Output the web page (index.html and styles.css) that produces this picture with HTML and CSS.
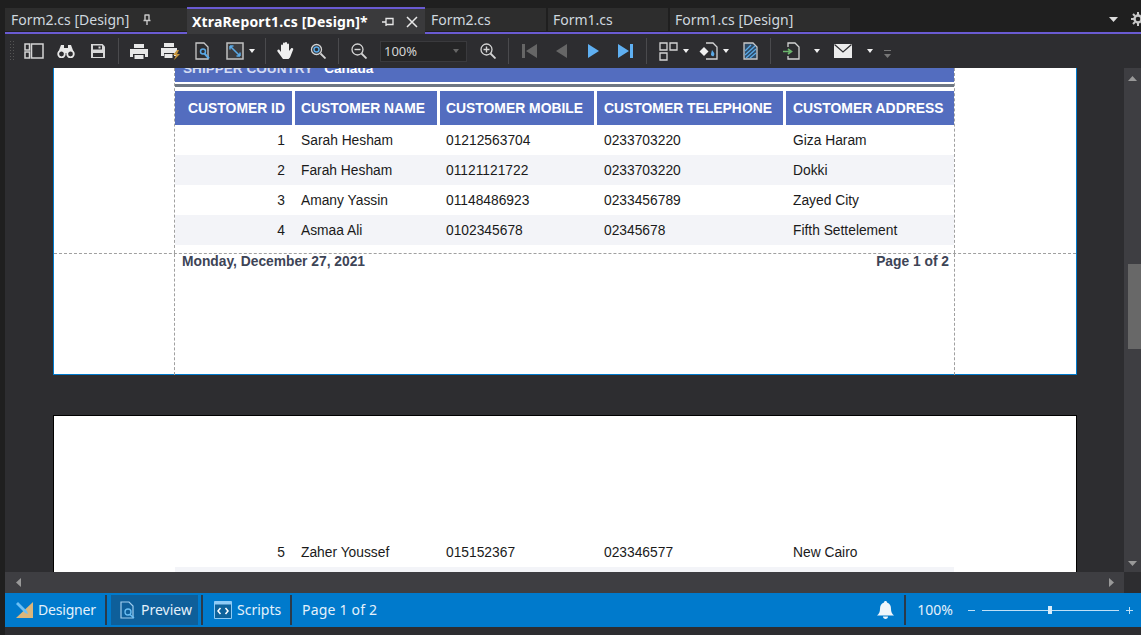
FILE: index.html
```html
<!DOCTYPE html>
<html lang="en">
<head>
<meta charset="utf-8">
<title>XtraReport1.cs [Design]</title>
<link rel="stylesheet" href="styles.css">
</head>
<body>
<div class="app">
  <div class="tabbar">
    <div class="tab tab-first"><span class="tab-name">Form2.cs [Design]</span>
      <svg class="pin-a" width="10" height="12" viewBox="0 0 10 12"><path d="M2.500 1h5M3 1v5M7 1v5M1.500 6.500h7M5 6.500V11" fill="none" stroke="#c8c8c8" stroke-width="1.400"/></svg>
    </div>
    <div class="tab tab-active"><span class="tab-name">XtraReport1.cs [Design]*</span>
      <svg class="pin-b" width="12" height="10" viewBox="0 0 12 10"><path d="M0 5h4M4 1.500h7v6H4zM4 1v8" fill="none" stroke="#e8e8e8" stroke-width="1.300"/></svg>
      <svg class="close" width="12" height="12" viewBox="0 0 12 12"><path d="M1 1l10 10M11 1L1 11" stroke="#e8e8e8" stroke-width="1.500"/></svg>
    </div>
    <div class="tab tab-f2"><span class="tab-name">Form2.cs</span></div>
    <div class="tab tab-f1"><span class="tab-name">Form1.cs</span></div>
    <div class="tab tab-f1d"><span class="tab-name">Form1.cs [Design]</span></div>
    <div class="tab-tools">
      <svg width="9" height="5" viewBox="0 0 9 5"><path d="M0 0h9L4.500 5z" fill="#dcdcdc"/></svg>
      <svg class="gear" width="14" height="14" viewBox="0 0 14 14"><circle cx="7" cy="7" r="3.500" fill="none" stroke="#c8c8c8" stroke-width="2.400"/><path d="M7 0v3M7 11v3M0 7h3M11 7h3M2 2l2 2M10 10l2 2M12 2l-2 2M4 10l-2 2" stroke="#c8c8c8" stroke-width="2"/></svg>
    </div>
  </div>

  <div class="toolbar">
    <div class="grip"></div>
    <div class="cell"><svg width="20" height="16" viewBox="0 0 20 16"><path d="M7.500 1h11.500v14H7.500zM1 1h4.500v6H1zM1 9h4.500v6H1z" fill="none" stroke="#d4d4d4" stroke-width="1.500"/></svg></div>
    <div class="cell"><svg width="18" height="14" viewBox="0 0 18 14"><path d="M4 1h3v3h4V1h3l3 8H1z" fill="#e8e8e8"/><circle cx="4.500" cy="10" r="3.300" fill="#2d2d30" stroke="#e8e8e8" stroke-width="1.800"/><circle cx="13.500" cy="10" r="3.300" fill="#2d2d30" stroke="#e8e8e8" stroke-width="1.800"/></svg></div>
    <div class="cell"><svg width="16" height="16" viewBox="0 0 16 16"><path d="M1 1h11.500L15 3.500V15H1z" fill="#d8d8d8"/><path d="M3 2.500h9v4H3zM3 10h10v4H3z" fill="#2d2d30"/><path d="M8.500 3.500h2v2h-2z" fill="#d8d8d8"/></svg></div>
    <div class="sep sep-a"></div>
    <div class="cell"><svg width="18" height="17" viewBox="0 0 18 17"><path d="M4 1h10v4H4z" fill="#e8e8e8"/><path d="M0 6h18v8h-3v-3H3v3H0z" fill="#e8e8e8"/><path d="M4.500 12h9v4h-9z" fill="#e8e8e8"/></svg></div>
    <div class="cell"><svg width="20" height="18" viewBox="0 0 20 18"><path d="M3 1h10v4H3z" fill="#e8e8e8"/><path d="M0 6h16v8h-3v-3H3v3H0z" fill="#e8e8e8"/><path d="M3.500 12h8v4h-8z" fill="#e8e8e8"/><path d="M16 8l-4 5h3l-2 5 6-6h-3l2-4z" fill="#c8963c"/></svg></div>
    <div class="cell"><svg width="16" height="18" viewBox="0 0 16 18"><path d="M1 1h8l4 4v12H1z" fill="none" stroke="#c8c8c8" stroke-width="1.300"/><circle cx="8" cy="9.500" r="2.500" fill="none" stroke="#5aa9e6" stroke-width="1.500"/><path d="M9.500 11.500l4.500 5" stroke="#5aa9e6" stroke-width="2"/></svg></div>
    <div class="cell cell-wide"><svg width="18" height="18" viewBox="0 0 18 18"><path d="M1 1h16v16H1z" fill="#3c3c3f" stroke="#c0c0c0" stroke-width="1.500"/><path d="M4 4l10 10M4 4h3.500M4 4v3.500M14 14h-3.500M14 14v-3.500" fill="none" stroke="#5aa9e6" stroke-width="1.500"/></svg><i class="caret"></i></div>
    <div class="sep sep-b"></div>
    <div class="cell"><svg width="20" height="20" viewBox="0 0 20 20"><path d="M5 11V4.500a1 1 0 0 1 2 0V9V2.500a1 1 0 0 1 2 0V9V2a1 1 0 0 1 2 0v7V3.500a1 1 0 0 1 2 0V10l2-2.500c1-1 3 0 2 1.500l-3 7.500-1.500 1.500H7L1.500 10.500c-.7-1.500 1-2.500 2-1.500z" fill="#f0f0f0"/></svg></div>
    <div class="cell"><svg width="16" height="16" viewBox="0 0 16 16"><circle cx="6.500" cy="6.500" r="5" fill="none" stroke="#d4d4d4" stroke-width="1.300"/><circle cx="6.500" cy="6.500" r="2.500" fill="none" stroke="#5aa9e6" stroke-width="1.500"/><path d="M10.500 10.500L15.500 15.500" stroke="#d4d4d4" stroke-width="1.800"/></svg></div>
    <div class="sep sep-c"></div>
    <div class="cell"><svg width="16" height="16" viewBox="0 0 16 16"><circle cx="6.500" cy="6.500" r="5.500" fill="none" stroke="#d4d4d4" stroke-width="1.300"/><path d="M3.500 6.500h6" stroke="#d4d4d4" stroke-width="1.400"/><path d="M10.500 10.500L15.500 15.500" stroke="#d4d4d4" stroke-width="1.800"/></svg></div>
    <div class="combo"><span>100%</span><i class="caret caret-dim"></i></div>
    <div class="cell"><svg width="16" height="16" viewBox="0 0 16 16"><circle cx="6.500" cy="6.500" r="5.500" fill="none" stroke="#d4d4d4" stroke-width="1.300"/><path d="M3.500 6.500h6M6.500 3.500v6" stroke="#d4d4d4" stroke-width="1.400"/><path d="M10.500 10.500L15.500 15.500" stroke="#d4d4d4" stroke-width="1.800"/></svg></div>
    <div class="sep sep-c"></div>
    <div class="cell"><svg width="15" height="14" viewBox="0 0 15 14"><path d="M0 0h3v14H0zM15 0v14L4 7z" fill="#666"/></svg></div>
    <div class="cell"><svg width="11" height="14" viewBox="0 0 11 14"><path d="M11 0v14L0 7z" fill="#666"/></svg></div>
    <div class="cell"><svg width="11" height="14" viewBox="0 0 11 14"><path d="M0 0v14l11-7z" fill="#5fb0f2"/></svg></div>
    <div class="cell"><svg width="15" height="14" viewBox="0 0 15 14"><path d="M0 0v14l11-7zM12 0h3v14h-3z" fill="#5fb0f2"/></svg></div>
    <div class="sep sep-d"></div>
    <div class="cell cell-wide2"><svg width="20" height="19" viewBox="0 0 20 19"><path d="M1 1h7v7H1zM11 1h7v7h-7zM1 11h7v7H1z" fill="none" stroke="#d4d4d4" stroke-width="1.300"/></svg><i class="caret"></i></div>
    <div class="cell cell-wide3"><svg width="20" height="18" viewBox="0 0 20 18"><path d="M7 1h7l4 4v12H7" fill="none" stroke="#d4d4d4" stroke-width="1.300"/><path d="M5 5l4.500 4.500L5 14 .5 9.500z" fill="#f0f0f0"/><path d="M13 8c2 2.500 3 3.500 2 5.500s-3.500 0-3-1.500z" fill="#5aa9e6"/></svg><i class="caret"></i></div>
    <div class="cell"><svg width="15" height="18" viewBox="0 0 15 18"><path d="M1 1h9l4 4v12H1z" fill="#2d4a66" stroke="#c8c8c8" stroke-width="1.300"/><path d="M2 9l6-6M2 13l10-9M3 16l10-9M7 16l6-5" stroke="#5aa9e6" stroke-width="1.300"/></svg></div>
    <div class="sep sep-a"></div>
    <div class="cell cell-export"><svg width="17" height="18" viewBox="0 0 17 18"><path d="M5 5V1h7l4 4v12H5v-3" fill="none" stroke="#d4d4d4" stroke-width="1.300"/><path d="M0 9.500h7M5 7l3.500 2.500L5 12" fill="none" stroke="#6cb56c" stroke-width="1.600"/></svg></div>
    <div class="caret-cell"><i class="caret"></i></div>
    <div class="cell cell-mail"><svg width="18" height="14" viewBox="0 0 18 14"><path d="M0 0h18v14H0z" fill="#ececec"/><path d="M.5 .5L9 8l8.500-7.500" fill="none" stroke="#2d2d30" stroke-width="1.200"/></svg></div>
    <div class="caret-cell"><i class="caret"></i></div>
    <svg class="overflow" width="7" height="9" viewBox="0 0 7 9"><path d="M0 0h7v1H0zM0 4h7L3.500 8z" fill="#777"/></svg>
  </div>

  <div class="workspace">
    <div class="canvas">
      <div class="page page-one">
        <div class="detail">
          <div class="column">
            <div class="band"><span class="band-label">SHIPPER COUNTRY</span><span class="band-value">Canada</span></div>
            <div class="rule"></div>
            <div class="grid-row head">
              <div class="num">CUSTOMER ID</div><div>CUSTOMER NAME</div><div>CUSTOMER MOBILE</div><div>CUSTOMER TELEPHONE</div><div>CUSTOMER ADDRESS</div>
            </div>
            <div class="grid-row">
              <div class="num">1</div><div>Sarah Hesham</div><div>01212563704</div><div>0233703220</div><div>Giza Haram</div>
            </div>
            <div class="grid-row alt">
              <div class="num">2</div><div>Farah Hesham</div><div>01121121722</div><div>0233703220</div><div>Dokki</div>
            </div>
            <div class="grid-row">
              <div class="num">3</div><div>Amany Yassin</div><div>01148486923</div><div>0233456789</div><div>Zayed City</div>
            </div>
            <div class="grid-row alt">
              <div class="num">4</div><div>Asmaa Ali</div><div>0102345678</div><div>02345678</div><div>Fifth Settelement</div>
            </div>
          </div>
        </div>
        <div class="footer">
          <div class="column column-footer">
            <span>Monday, December 27, 2021</span><span>Page 1 of 2</span>
          </div>
        </div>
      </div>
      <div class="page page-two">
        <div class="column-plain">
          <div class="grid-row">
            <div class="num">5</div><div>Zaher Youssef</div><div>015152367</div><div>023346577</div><div>New Cairo</div>
          </div>
          <div class="grid-row alt"></div>
        </div>
      </div>
    </div>
    <div class="vscroll">
      <svg width="9" height="5" viewBox="0 0 9 5"><path d="M0 5h9L4.500 0z" fill="#999"/></svg>
      <div class="vthumb"></div>
      <svg class="vdown" width="9" height="5" viewBox="0 0 9 5"><path d="M0 0h9L4.500 5z" fill="#999"/></svg>
    </div>
  </div>

  <div class="hscroll">
    <svg width="5" height="9" viewBox="0 0 5 9"><path d="M5 0v9L0 4.500z" fill="#999"/></svg>
    <div class="hend"><svg width="5" height="9" viewBox="0 0 5 9"><path d="M0 0v9l5-4.500z" fill="#999"/></svg></div>
    <div class="corner"></div>
  </div>

  <div class="statusbar">
    <div class="st-item st-designer"><svg width="18" height="18" viewBox="0 0 18 18"><path d="M18 1v16H1z" fill="#dcb67a"/><path d="M1 3l2-2 9 9 1 3-3-1z" fill="#6cc0f5"/></svg><span class="st-tight">Designer</span></div>
    <div class="st-sep"></div>
    <div class="st-item st-preview"><svg width="16" height="18" viewBox="0 0 16 18"><path d="M1 1h8l4 4v12H1z" fill="none" stroke="#9fcdee" stroke-width="1.200"/><circle cx="8" cy="11" r="3" fill="none" stroke="#6cc0f5" stroke-width="1.300"/><path d="M10 13.500l4 3.500" stroke="#6cc0f5" stroke-width="1.500"/></svg><span>Preview</span></div>
    <div class="st-sep"></div>
    <div class="st-item st-scripts"><svg width="18" height="18" viewBox="0 0 18 18"><path d="M.5 .5h17v17H.5z" fill="#0e639c" stroke="#8ecbf5"/><path d="M.5 .5h17v3H.5z" fill="#8ecbf5"/><path d="M6.500 7L4 10l2.500 3M11.500 7L14 10l-2.500 3" fill="none" stroke="#fff" stroke-width="1.500"/></svg><span>Scripts</span></div>
    <div class="st-sep"></div>
    <div class="st-page">Page 1 of 2</div>
    <div class="st-right">
      <svg class="bell" width="17" height="18" viewBox="0 0 17 18"><path d="M8.500 0c1 0 1.500.7 1.500 1.500C13 2.500 14 5 14 8c0 3 1 5 3 6.500H0C2 13 3 11 3 8c0-3 1-5.500 4-6.500C7 .7 7.500 0 8.500 0z" fill="#f0f6fb"/><path d="M6 15.500h5c0 1.500-1 2.500-2.500 2.500S6 17 6 15.500z" fill="#f0f6fb"/></svg>
      <div class="st-sep"></div>
      <div class="st-zoom">100%</div>
      <div class="st-minus"></div>
      <div class="slider"><div class="slider-thumb"></div></div>
      <svg class="plus" width="7" height="7" viewBox="0 0 7 7"><path d="M0 3.500h7M3.500 0v7" stroke="#bfe0f7"/></svg>
    </div>
  </div>
</div>
</body>
</html>
```
FILE: styles.css
```css
* { box-sizing: border-box; }
html, body { margin: 0; padding: 0; }
body { width: 1141px; height: 635px; overflow: hidden; background: #1f1f1f; font-family: "Liberation Sans", Arial, sans-serif; }
.app { width: 1136px; height: 635px; margin-left: 5px; display: flex; flex-direction: column; background: #2d2d30; }

/* tab strip */
.tabbar { height: 34px; flex: none; display: flex; align-items: flex-start; background: #1f1f1f; border-bottom: 2px solid #6a5bd2; font: 14px "Noto Sans", sans-serif; color: #cfd8df; }
.tab { height: 23px; flex: none; margin-top: 8px; background: #2d2d2d; display: flex; align-items: center; padding-left: 6px; white-space: nowrap; }
.tab-first { width: 182px; }
.tab-active { width: 238px; height: 27px; margin-top: 7px; padding-left: 5px; background: #3a3a3c; border-top: 2px solid #6a5bd2; color: #fff; font-weight: 700; letter-spacing: 0.170px; }
.tab-f2 { width: 121px; }
.tab-f1 { width: 120px; margin-left: 2px; padding-left: 5px; }
.tab-f1d { width: 180px; margin-left: 2px; padding-left: 5px; }
.pin-a { margin-left: 13px; }
.pin-b { margin-left: 14px; }
.close { margin-left: 12px; }
.tab-tools { flex: 1; min-width: 0; height: 32px; overflow: hidden; display: flex; align-items: center; gap: 13px; padding: 6px 0 0 259px; }
.tab-tools svg { flex: none; }

/* toolbar */
.toolbar { height: 34px; flex: none; display: flex; align-items: center; background: #2d2d30; padding-left: 4px; }
.grip { width: 5px; height: 22px; margin-right: 4px; background-image: radial-gradient(#555 40%, transparent 45%); background-size: 3px 3px; }
.cell { width: 32px; height: 34px; flex: none; display: flex; align-items: center; justify-content: center; }
.cell-wide { width: 41px; justify-content: flex-start; padding-left: 7px; gap: 5px; }
.cell-wide2 { width: 42px; justify-content: flex-start; padding-left: 8px; gap: 4px; }
.cell-wide3 { width: 41px; justify-content: flex-start; padding-left: 6px; gap: 4px; }
.cell-export { width: 32px; }
.cell-mail { width: 34px; }
.caret-cell { width: 19px; display: flex; justify-content: center; }
.caret { display: block; width: 0; height: 0; border-style: solid; border-width: 4px 3.500px 0; border-color: #f0f0f0 transparent transparent; flex: none; }
.caret-dim { border-top-color: #666; }
.sep { width: 1px; height: 26px; background: #4a4a4d; flex: none; }
.sep-a { margin: 0 4px; }
.sep-b { margin: 0 4px 0 5px; }
.sep-c { margin: 0 4px; }
.sep-d { margin: 0 4px 0 5px; }
.combo { width: 87px; height: 21px; margin-left: 5px; margin-right: 5px; flex: none; background: #252526; border: 1px solid #3a3a3d; display: flex; align-items: center; justify-content: space-between; padding: 0 7px 0 3px; font: 13px "Noto Sans", sans-serif; color: #d4d4d4; }
.overflow { margin-left: 5px; margin-top: 6px; }

/* workspace */
.workspace { height: 504px; flex: none; display: flex; }
.canvas { width: 1119px; flex: none; overflow: hidden; padding-left: 48px; background: #2d2d30; }
.page { width: 1024px; background: #fff; color: #1a1a1a; font-size: 13.800px; }
.page-one { height: 307px; border: 1px solid #007acc; border-top: 0; }
.page-two { height: 200px; margin-top: 40px; border: 1px solid #000; padding-top: 121px; }
.detail { height: 185px; }
.column { width: 781px; margin-left: 120px; height: 100%; display: flow-root; border-left: 1px dashed #a0a0a0; border-right: 1px dashed #a0a0a0; }
.column-plain { width: 779px; margin-left: 121px; }
.band { height: 28px; margin-top: -14px; background: #536dbf; display: flex; align-items: center; padding-left: 8px; gap: 11px; font-size: 13.600px; font-weight: 700; }
.band-label { color: #d4dcf2; }
.band-value { color: #fff; }
.rule { height: 9px; border-top: 2px solid #fff; border-bottom: 4px solid #fff; background: #6e7783; }
.grid-row { display: grid; grid-template-columns: 117px 142px 154px 186px 168px; column-gap: 3px; height: 30px; align-items: center; }
.grid-row > div { padding-left: 6px; padding-right: 7px; white-space: nowrap; }
.grid-row > div:nth-child(4), .grid-row > div:nth-child(5) { padding-left: 7px; }
.grid-row .num { text-align: right; padding-left: 0; }
.alt { background: #f3f4f8; }
.head { height: 34px; color: #fff; font-size: 13.900px; font-weight: 700; align-items: stretch; }
.head > div { background: #536dbf; display: flex; align-items: center; }
.head > .num { justify-content: flex-end; }
.footer { height: 122px; border-top: 1px dashed #a0a0a0; }
.column-footer { display: flex; justify-content: space-between; padding: 0 5px 0 7px; font-weight: 700; color: #3d4456; line-height: 16px; }

/* scrollbars */
.vscroll { width: 17px; flex: none; background: #3e3e42; display: flex; flex-direction: column; align-items: flex-end; padding-top: 8px; }
.vscroll svg { margin-right: 4px; flex: none; }
.vthumb { width: 13px; height: 85px; margin-top: 183px; background: #686868; flex: none; }
.vscroll .vdown { margin-top: 212px; }
.hscroll { height: 21px; flex: none; display: flex; align-items: center; background: #3e3e42; padding-left: 11px; }
.hend { margin-left: auto; width: 15px; display: flex; }
.corner { width: 17px; height: 21px; background: #2d2d30; }

/* status bar */
.statusbar { height: 34px; flex: none; display: flex; align-items: center; background: #007acc; color: #e4f1fb; font: 14px "Noto Sans", sans-serif; }
.st-item { display: flex; align-items: center; height: 30px; gap: 5px; flex: none; }
.st-item span, .st-page, .st-zoom { padding-bottom: 2px; }
.st-tight { letter-spacing: -0.200px; }
.st-designer { width: 100px; padding-left: 10px; }
.st-preview { width: 87px; margin: 0 3px 0 4px; padding-left: 9px; background: #0e5f9a; }
.st-scripts { width: 87px; padding-left: 11px; }
.st-sep { width: 2px; height: 30px; background: #2b3a4a; flex: none; }
.st-page { margin-left: 10px; letter-spacing: 0.200px; }
.st-right { margin-left: auto; display: flex; align-items: center; }
.bell { margin-right: 10px; }
.st-zoom { margin-left: 11px; }
.st-minus { width: 7px; height: 1px; background: #bfe0f7; margin-left: 15px; }
.slider { width: 137px; height: 1px; margin-left: 7px; background: #bfe0f7; display: flex; align-items: center; padding-left: 66px; }
.slider-thumb { width: 4px; height: 8px; background: #d8ecfa; flex: none; }
.plus { margin: 0 8px 0 7px; }
```
